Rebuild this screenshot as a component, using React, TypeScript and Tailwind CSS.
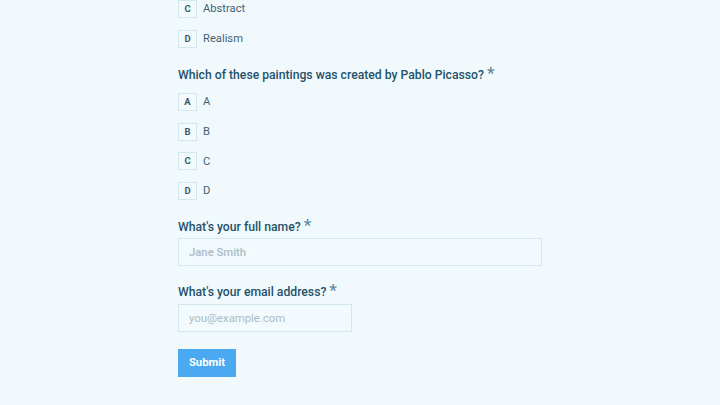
import React from "react";

const font = { fontFamily: "Roboto, 'Liberation Sans', sans-serif" };

function Option({ letter, label }: { letter: string; label: string }) {
  return (
    <div className="flex items-center h-[18px] gap-[6px]">
      <div className="w-[19px] h-[18px] border border-[#d3e6ee] bg-[#f3fafd] flex items-center justify-center text-[9.5px] font-bold text-[#3a5a6b]">
        {letter}
      </div>
      <span className="text-[11.2px] text-[#3f6376] leading-none">{label}</span>
    </div>
  );
}

function Heading({ children }: { children: React.ReactNode }) {
  return (
    <div className="h-[20px] flex items-center text-[12.2px] font-medium text-[#23536b]">
      <span>{children}</span>
      <span className="ml-[3px] text-[17px] leading-none text-[#5d8aa0] relative top-[-2px]">*</span>
    </div>
  );
}

export default function App() {
  return (
    <div className="w-[720px] h-[405px] overflow-hidden bg-[#f2f9fd]" style={font}>
      <div className="w-[364px] mx-auto mt-[0px] flex flex-col">
        <div className="flex flex-col gap-[12px]">
          <Option letter="C" label="Abstract" />
          <Option letter="D" label="Realism" />
        </div>
        <div className="mt-[17px]">
          <Heading>Which of these paintings was created by Pablo Picasso?</Heading>
        </div>
        <div className="mt-[8px] flex flex-col gap-[11.7px]">
          <Option letter="A" label="A" />
          <Option letter="B" label="B" />
          <Option letter="C" label="C" />
          <Option letter="D" label="D" />
        </div>
        <div className="mt-[17px]">
          <Heading>What's your full name?</Heading>
        </div>
        <input
          className="mt-[1px] h-[28px] w-[364px] border border-[#d3e6ee] bg-[#f3fafd] px-[10px] text-[11.3px] font-medium text-[#23536b] placeholder:text-[#a9bcc6] outline-none"
          placeholder="Jane Smith"
        />
        <div className="mt-[16px]">
          <Heading>What's your email address?</Heading>
        </div>
        <input
          className="mt-[2px] h-[28px] w-[174px] border border-[#d3e6ee] bg-[#f3fafd] px-[10px] text-[11.3px] text-[#23536b] placeholder:text-[#a9bcc6] outline-none"
          placeholder="you@example.com"
        />
        <button className="mt-[17px] h-[28px] w-[58px] bg-[#4aa9f1] text-white text-[11.3px] font-bold">
          Submit
        </button>
      </div>
    </div>
  );
}
